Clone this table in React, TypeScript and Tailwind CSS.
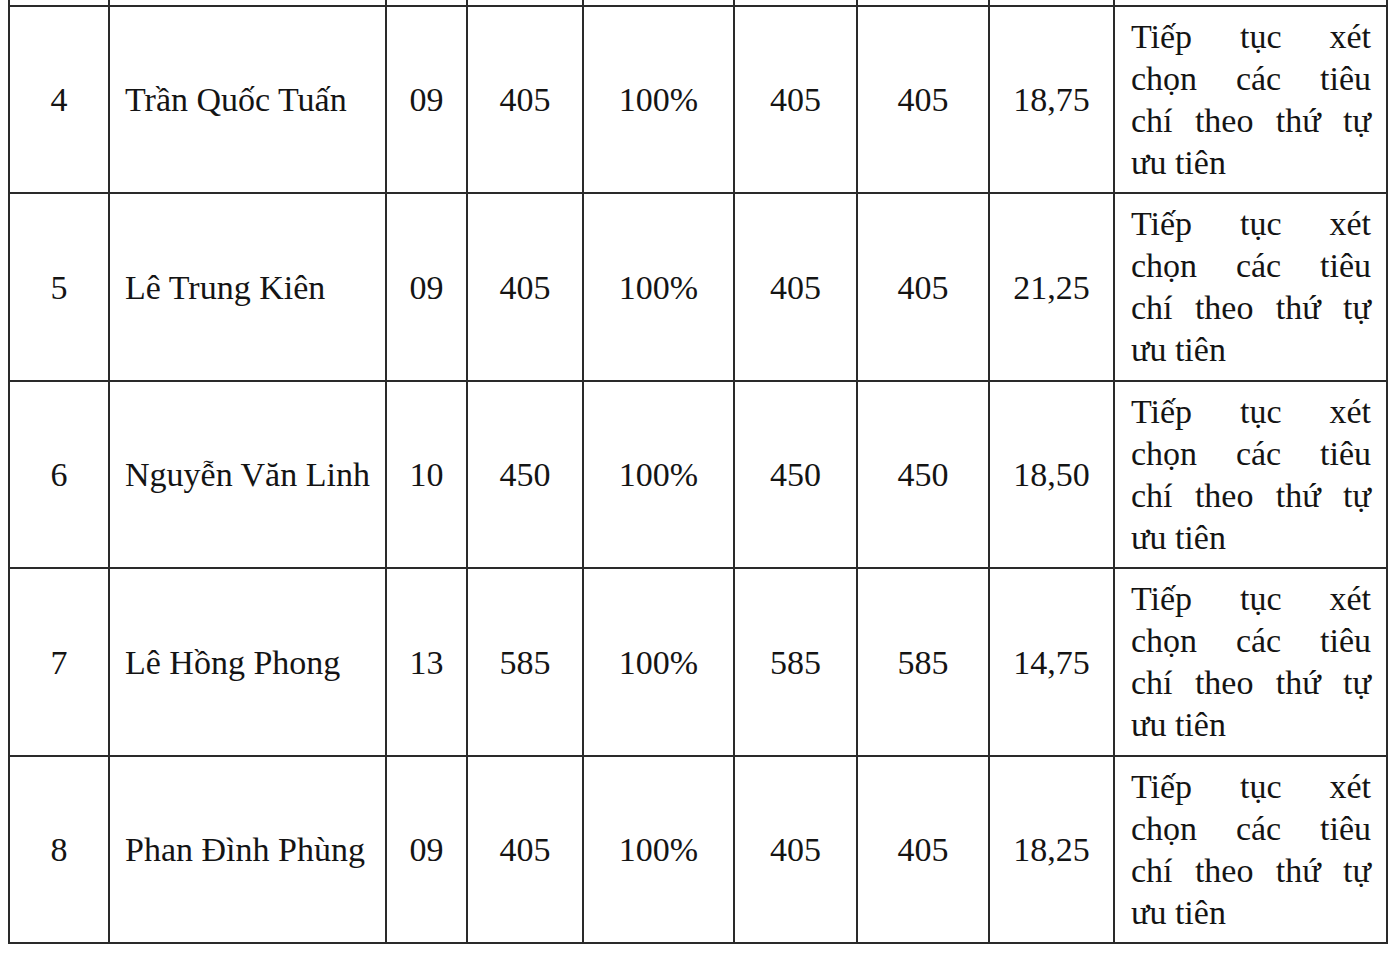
import React from "react";

type Row = {
  stt: string;
  name: string;
  classes: string;
  target: string;
  rate: string;
  registered: string;
  admitted: string;
  score: string;
};

const rows: Row[] = [
  { stt: "4", name: "Trần Quốc Tuấn", classes: "09", target: "405", rate: "100%", registered: "405", admitted: "405", score: "18,75" },
  { stt: "5", name: "Lê Trung Kiên", classes: "09", target: "405", rate: "100%", registered: "405", admitted: "405", score: "21,25" },
  { stt: "6", name: "Nguyễn Văn Linh", classes: "10", target: "450", rate: "100%", registered: "450", admitted: "450", score: "18,50" },
  { stt: "7", name: "Lê Hồng Phong", classes: "13", target: "585", rate: "100%", registered: "585", admitted: "585", score: "14,75" },
  { stt: "8", name: "Phan Đình Phùng", classes: "09", target: "405", rate: "100%", registered: "405", admitted: "405", score: "18,25" },
];

const noteLines = [
  ["Tiếp", "tục", "xét"],
  ["chọn", "các", "tiêu"],
  ["chí", "theo", "thứ", "tự"],
];

const cell = "border-r-2 border-b-2 border-[#2a2a2a] flex items-center";

function Note() {
  return (
    <div className="w-full pl-[16px] pr-[15px] leading-[42px]">
      {noteLines.map((words, i) => (
        <div key={i} className="flex justify-between">
          {words.map((w) => (
            <span key={w}>{w}</span>
          ))}
        </div>
      ))}
      <div>ưu tiên</div>
    </div>
  );
}

export default function App() {
  return (
    <div
      className="w-[1398px] h-[954px] bg-white text-[#141414] text-[34px] overflow-hidden"
      style={{ fontFamily: '"Liberation Serif", "Times New Roman", serif' }}
    >
      <div className="ml-[8px] w-[1378px] border-l-2 border-[#2a2a2a] grid grid-cols-[100px_277px_81px_116px_151px_123px_132px_125px_273px]">
        {Array.from({ length: 9 }).map((_, i) => (
          <div key={"top" + i} className="h-[7px] border-r-2 border-b-2 border-[#2a2a2a]" />
        ))}
        {rows.map((r, idx) => {
          const h = idx % 2 === 0 ? "h-[187px]" : "h-[188px]";
          return (
            <React.Fragment key={r.stt}>
              <div className={`${cell} ${h} justify-center`}>{r.stt}</div>
              <div className={`${cell} ${h} pl-[15px]`}>{r.name}</div>
              <div className={`${cell} ${h} justify-center`}>{r.classes}</div>
              <div className={`${cell} ${h} justify-center`}>{r.target}</div>
              <div className={`${cell} ${h} justify-center`}>{r.rate}</div>
              <div className={`${cell} ${h} justify-center`}>{r.registered}</div>
              <div className={`${cell} ${h} justify-center`}>{r.admitted}</div>
              <div className={`${cell} ${h} justify-center`}>{r.score}</div>
              <div className={`${cell} ${h}`}>
                <Note />
              </div>
            </React.Fragment>
          );
        })}
      </div>
    </div>
  );
}
